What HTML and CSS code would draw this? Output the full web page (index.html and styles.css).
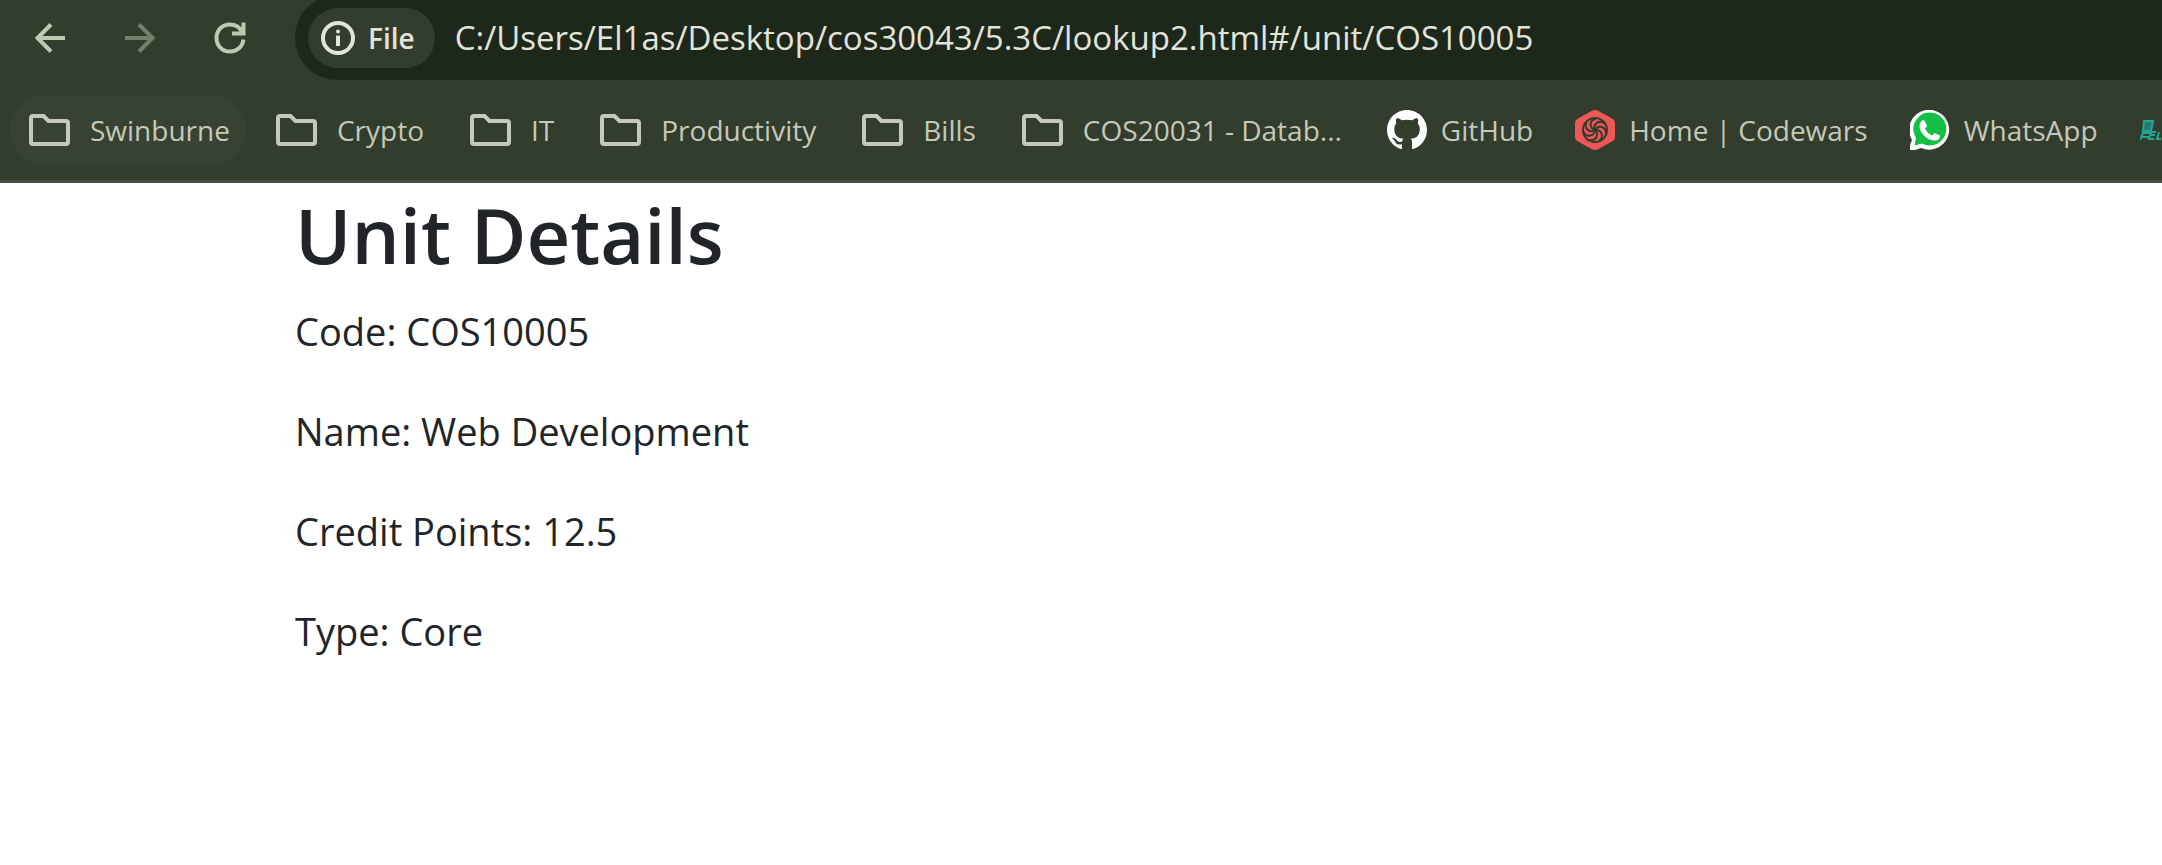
FILE: index.html
```html
<!DOCTYPE html>
<html lang="en">
<head>
<meta charset="utf-8">
<title>Unit Details</title>
<link rel="stylesheet" href="styles.css">
</head>
<body>
<svg class="symbols" aria-hidden="true">
  <symbol id="folder" viewBox="0 0 44 34">
    <path d="M5 3H15.500L20.500 8H38Q40 8 40 10V29Q40 31 38 31H5Q3 31 3 29V5Q3 3 5 3Z" fill="none" stroke="#c5c8ba" stroke-width="4"/>
  </symbol>
</svg>
<header class="browser">
  <div class="toolbar">
    <nav class="nav-buttons" aria-label="History">
      <button class="nav-button" type="button" aria-label="Back">
        <svg width="32" height="32" viewBox="0 0 32 32" fill="none" stroke="currentColor" stroke-width="4"><path d="M31 16H4M17 2.500L3.500 16L17 29.500"/></svg>
      </button>
      <button class="nav-button" type="button" aria-label="Forward" disabled>
        <svg width="32" height="32" viewBox="0 0 32 32" fill="none" stroke="currentColor" stroke-width="4"><path d="M1 16H28M15 2.500L28.500 16L15 29.500"/></svg>
      </button>
      <button class="nav-button" type="button" aria-label="Reload">
        <svg width="32" height="32" viewBox="0 0 32 32" fill="none" stroke="currentColor" stroke-width="4"><path d="M29.500 0.500V11.500H18M28.500 10.500C26 5.500 21.500 2.500 16 2.500C8 2.500 2.500 8.500 2.500 16S8 29.500 16 29.500C23 29.500 28.500 25 29.500 17.500"/></svg>
      </button>
    </nav>
    <div class="address">
      <button class="scheme" type="button">
        <svg width="34" height="34" viewBox="0 0 34 34"><circle cx="17" cy="17" r="15" fill="none" stroke="currentColor" stroke-width="4"/><circle cx="17" cy="10.500" r="2" fill="currentColor"/><path d="M17 14.500V25" stroke="currentColor" stroke-width="4"/></svg>
        File
      </button>
      <input class="url" type="text" aria-label="Address" value="C:/Users/El1as/Desktop/cos30043/5.3C/lookup2.html#/unit/COS10005">
    </div>
  </div>
  <nav class="bookmarks" aria-label="Bookmarks">
    <a class="bookmark bookmark-active" href="#"><svg class="folder"><use href="#folder"/></svg>Swinburne</a>
    <a class="bookmark" href="#"><svg class="folder"><use href="#folder"/></svg>Crypto</a>
    <a class="bookmark" href="#"><svg class="folder"><use href="#folder"/></svg>IT</a>
    <a class="bookmark" href="#"><svg class="folder"><use href="#folder"/></svg>Productivity</a>
    <a class="bookmark" href="#"><svg class="folder"><use href="#folder"/></svg>Bills</a>
    <a class="bookmark" href="#"><svg class="folder"><use href="#folder"/></svg>COS20031 - Datab...</a>
    <a class="bookmark site" href="#"><svg class="favicon" viewBox="0 0 16 16"><path fill="#fff" d="M8 0C3.580 0 0 3.580 0 8c0 3.540 2.290 6.530 5.470 7.590.4.070.55-.17.55-.38 0-.19-.01-.82-.01-1.490-2.010.37-2.530-.49-2.690-.94-.09-.23-.48-.94-.82-1.130-.28-.15-.68-.52-.01-.53.63-.01 1.080.58 1.230.82.72 1.210 1.870.87 2.330.66.070-.52.28-.87.51-1.070-1.780-.2-3.640-.89-3.640-3.950 0-.87.31-1.590.82-2.150-.08-.2-.36-1.020.08-2.120 0 0 .67-.21 2.200.82.64-.18 1.320-.27 2-.27s1.360.09 2 .27c1.530-1.040 2.200-.82 2.200-.82.44 1.100.16 1.920.08 2.120.51.56.82 1.270.82 2.150 0 3.070-1.870 3.750-3.650 3.950.29.25.54.73.54 1.480 0 1.070-.01 1.930-.01 2.200 0 .21.15.46.55.38A8 8 0 0 0 16 8c0-4.420-3.580-8-8-8z"/></svg>GitHub</a>
    <a class="bookmark site" href="#"><svg class="favicon" viewBox="0 0 40 40"><path fill="#f05656" d="M16.500 1Q20-1 23.500 1L37 8.500Q40 10 40 13.500V26.500Q40 30 37 31.500L23.500 39Q20 41 16.500 39L3 31.500Q0 30 0 26.500V13.500Q0 10 3 8.500Z"/><g fill="none" stroke="#323d2d" stroke-width="2"><circle cx="20" cy="20" r="12"/><path id="blade" d="M20 20C14 18 14 10 21 8.500"/><use href="#blade" transform="rotate(51 20 20)"/><use href="#blade" transform="rotate(103 20 20)"/><use href="#blade" transform="rotate(154 20 20)"/><use href="#blade" transform="rotate(206 20 20)"/><use href="#blade" transform="rotate(257 20 20)"/><use href="#blade" transform="rotate(309 20 20)"/></g></svg>Home | Codewars</a>
    <a class="bookmark site" href="#"><svg class="favicon" viewBox="0 0 40 40"><path fill="#fff" d="M0 40V35L2 30A20 20 0 1 1 11 38L5 40Z"/><path fill="#12c143" d="M4.500 35.500L6 28A16.500 16.500 0 1 1 12 33.500Z"/><path fill="#fff" d="M12 10.500H14.500L17 16L15 19Q17.500 23.500 22 25.500L24.500 23L30 25.500Q30 31 24 30.500C16 30 10 22 9.500 17Q9.500 12.500 12 10.500Z"/></svg>WhatsApp</a>
    <a class="bookmark site" href="#" aria-label="Bookmark"><svg class="favicon" viewBox="0 0 40 40" fill="none" stroke="#20a594" stroke-width="2"><path fill="#20a594" fill-opacity=".6" d="M4 11H13L11 21H3Z"/><path d="M0 30L3 23H10M2 27H9M16 22H11L9 29H14M10 25H15M19 22L17 29H21M26 22L24 29H29L31 22"/></svg></a>
  </nav>
</header>
<main class="container">
  <h1 class="title">Unit Details</h1>
  <p class="detail">Code: COS10005</p>
  <p class="detail">Name: Web Development</p>
  <p class="detail">Credit Points: 12.5</p>
  <p class="detail">Type: Core</p>
</main>
</body>
</html>
```

FILE: styles.css
```css
* {
  box-sizing: border-box;
}

body {
  margin: 0;
  background: #fff;
  color: #212529;
  font-family: "Open Sans", "Noto Sans", sans-serif;
  overflow-x: hidden;
}

.symbols {
  display: none;
}

.browser {
  background: #323d2d;
  border-bottom: 3px solid #454b42;
  overflow: hidden;
}

.toolbar {
  display: flex;
  height: 80px;
}

.nav-buttons {
  display: flex;
  align-items: center;
  gap: 58px;
  height: 75px;
  padding: 0 49px 0 34px;
}

.nav-button {
  display: flex;
  padding: 0;
  border: 0;
  background: none;
  color: #bbcbb2;
}

.nav-button:disabled {
  color: #72806b;
}

.address {
  display: flex;
  flex: 1;
  align-items: center;
  gap: 20px;
  height: 85px;
  margin-top: -5px;
  padding-left: 13px;
  border-radius: 42px 0 0 42px;
  background: #1d271a;
}

.scheme {
  display: flex;
  align-items: center;
  gap: 13px;
  height: 60px;
  padding: 0 20px 0 13px;
  border: 0;
  border-radius: 30px;
  background: #323d2d;
  color: #e1e4da;
  font: 600 28px/40px "Open Sans", "Noto Sans", sans-serif;
}

.url {
  flex: 1;
  min-width: 0;
  padding: 0;
  border: 0;
  outline: 0;
  background: none;
  color: #e1e4da;
  font: 33px/48px "Open Sans", "Noto Sans", sans-serif;
}

.bookmarks {
  display: flex;
  gap: 11px;
  padding: 15px 0 15px 10px;
}

.bookmark {
  display: flex;
  flex: none;
  align-items: center;
  gap: 18px;
  height: 70px;
  padding: 0 16px 0 18px;
  border-radius: 35px;
  color: #c5c8ba;
  font-size: 28px;
  line-height: 40px;
  text-decoration: none;
  white-space: nowrap;
}

.bookmark-active {
  background: #384233;
}

.site {
  gap: 14px;
  padding-right: 13px;
}

.folder {
  width: 44px;
  height: 34px;
}

.favicon {
  width: 40px;
  height: 40px;
}

.container {
  padding: 4px 295px 0;
}

.title {
  margin: 0 0 18px;
  font-size: 76px;
  font-weight: 600;
  line-height: 96px;
}

.detail {
  margin: 0 0 40px;
  font-size: 38px;
  line-height: 60px;
}
```
